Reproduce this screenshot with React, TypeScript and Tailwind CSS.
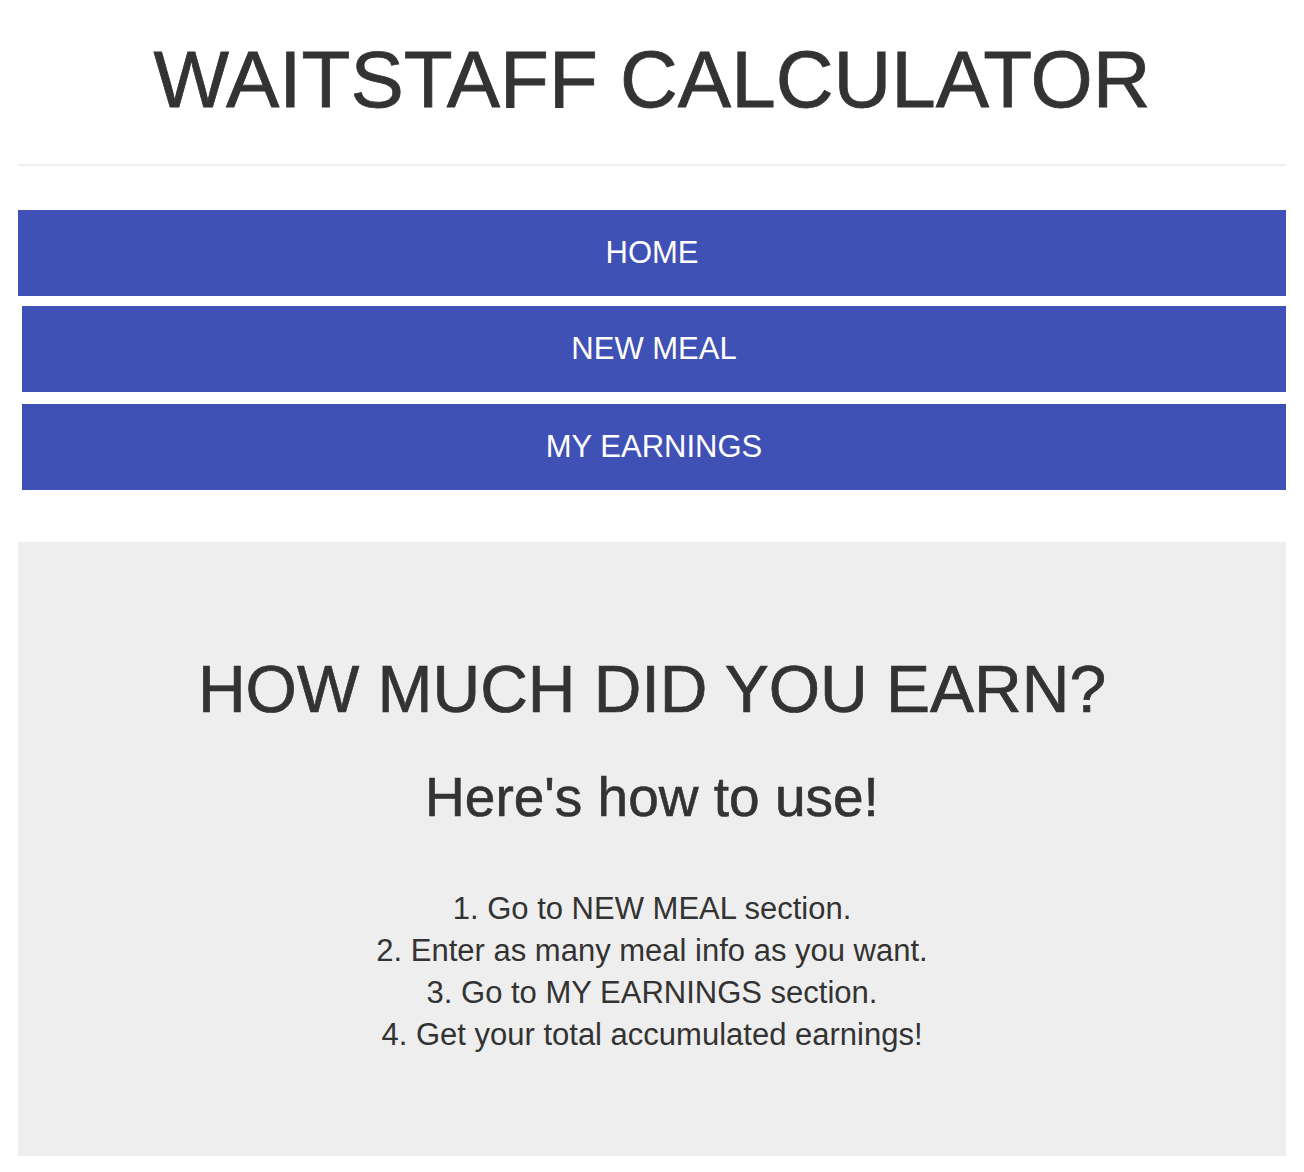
import React from "react";

const steps = [
  "1. Go to NEW MEAL section.",
  "2. Enter as many meal info as you want.",
  "3. Go to MY EARNINGS section.",
  "4. Get your total accumulated earnings!",
];

function NavButton({ label, first }: { label: string; first?: boolean }) {
  return (
    <a
      href="#"
      className={
        "flex h-[86px] items-center justify-center bg-[#3f51b5] text-[31px] text-white " +
        (first ? "" : "ml-[4px]")
      }
    >
      {label}
    </a>
  );
}

export default function App() {
  return (
    <div
      className="min-h-[1172px] bg-white px-[18px] text-[#333333]"
      style={{ fontFamily: '"Liberation Sans", Arial, Helvetica, sans-serif' }}
    >
      <h1 className="pt-[37px] text-center text-[80px] leading-[86px] font-medium [-webkit-text-stroke:0.8px_#333333]">
        WAITSTAFF CALCULATOR
      </h1>
      <hr className="mt-[41px] border-t-2 border-[#eeeeee]" />

      <nav className="mt-[44px] flex flex-col">
        <NavButton label="HOME" first />
        <div className="mt-[10px]">
          <NavButton label="NEW MEAL" />
        </div>
        <div className="mt-[12px]">
          <NavButton label="MY EARNINGS" />
        </div>
      </nav>

      <section className="mt-[52px] h-[614px] bg-[#eeeeee] pt-[111px] text-center">
        <h2 className="text-[66px] leading-[72px] font-medium [-webkit-text-stroke:0.7px_#333333]">
          HOW MUCH DID YOU EARN?
        </h2>
        <h3 className="mt-[42px] text-[55px] leading-[60px] font-medium [-webkit-text-stroke:0.6px_#333333]">
          Here's how to use!
        </h3>
        <div className="mt-[61px] text-[31px] leading-[42px]">
          {steps.map((s) => (
            <div key={s}>{s}</div>
          ))}
        </div>
      </section>
    </div>
  );
}
